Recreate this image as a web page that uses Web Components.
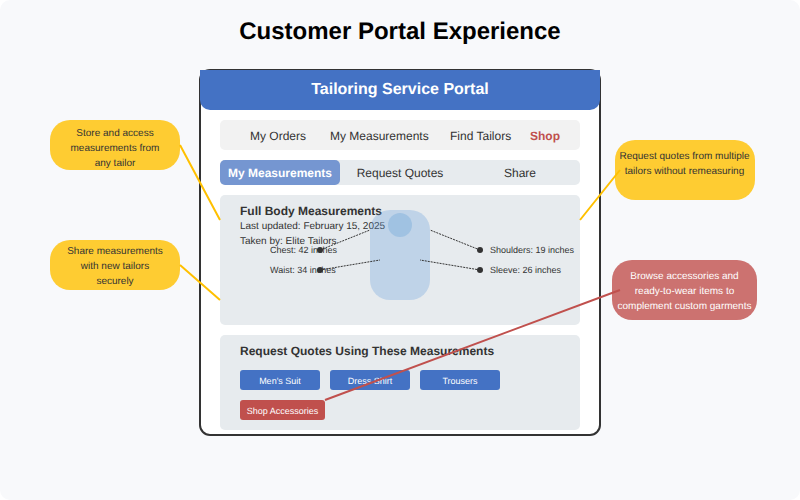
<!DOCTYPE html>
<html lang="en">
<head>
<meta charset="utf-8">
<title>Customer Portal Experience</title>
<style>
  body { margin: 0; background: #fff; font-family: "Liberation Sans", Arial, sans-serif; color: #333; text-rendering: geometricPrecision; }
</style>
</head>
<body>
<portal-scene>
  <span slot="title">Customer Portal Experience</span>
  <call-out slot="left">Store and access<br>measurements from<br>any tailor</call-out>
  <call-out slot="left" class="tight">Share measurements<br>with new tailors<br>securely</call-out>
  <service-portal slot="portal">
    <span slot="heading">Tailoring Service Portal</span>
    <portal-nav></portal-nav>
    <portal-tabs></portal-tabs>
    <info-panel>
      <span slot="heading">Full Body Measurements</span>
      <div>Last updated: February 15, 2025</div>
      <div>Taken by: Elite Tailors</div>
      <body-figure slot="figure"></body-figure>
    </info-panel>
    <info-panel class="quotes">
      <span slot="heading">Request Quotes Using These Measurements</span>
      <quote-actions></quote-actions>
    </info-panel>
  </service-portal>
  <call-out slot="right" class="wide">Request quotes from multiple<br>tailors without remeasuring</call-out>
  <call-out slot="right" class="shop">Browse accessories and<br>ready-to-wear items to<br>complement custom garments</call-out>
</portal-scene>

<script>
const define = (name, html) => customElements.define(name, class extends HTMLElement {
  constructor() {
    super();
    this.attachShadow({ mode: "open" }).innerHTML = html;
  }
});

define("portal-scene", `
  <style>
    :host { display: block; position: relative; box-sizing: border-box; min-height: 100vh; background: #f8f9fb; border-radius: 10px; overflow: hidden; }
    h1 { margin: 0; padding: 18px 0 23px; font-size: 24px; line-height: 28px; text-align: center; color: #000; }
    .row { display: grid; grid-template-columns: 1fr 402px 1fr; }
    .left, .right { display: flex; flex-direction: column; }
    .left { align-items: flex-end; gap: 70px; padding: 51px 19px 0 0; }
    .right { align-items: center; justify-self: start; gap: 60px; padding: 71px 0 0 11px; }
    svg { position: absolute; top: 0; left: 50%; margin-left: -400px; pointer-events: none; }
  </style>
  <h1><slot name="title"></slot></h1>
  <div class="row">
    <div class="left"><slot name="left"></slot></div>
    <slot name="portal"></slot>
    <div class="right"><slot name="right"></slot></div>
  </div>
  <svg width="800" height="500" viewBox="0 0 800 500" fill="none" stroke-width="2" aria-hidden="true">
    <path stroke="#ffc000" d="M180 145 220 220M180 265 220 300M620 170 580 220"/>
    <path stroke="#c0504d" d="M620 290 325 400"/>
  </svg>`);

define("call-out", `
  <style>
    :host { display: block; box-sizing: border-box; width: 130px; height: 50px; padding-top: 6px; border-radius: 20px; background: rgb(255 192 0 / .8); font-size: 10px; line-height: 15px; text-align: center; white-space: nowrap; }
    :host(.tight) { padding-top: 4px; }
    :host(.wide) { width: 140px; height: 60px; padding-top: 9px; }
    :host(.shop) { width: 145px; height: 60px; padding-top: 9px; background: rgb(192 80 77 / .8); color: #fff; }
  </style>
  <slot></slot>`);

define("service-portal", `
  <style>
    :host { display: block; box-sizing: border-box; border: 2px solid #333; border-radius: 11px; background: #fff; }
    h2 { margin: -1px -1px 0; border-radius: 0 0 10px 10px; background: #4472c4; color: #fff; font-size: 16px; line-height: 40px; text-align: center; }
    .content { display: flex; flex-direction: column; gap: 10px; padding: 10px 19px 4px; }
  </style>
  <h2><slot name="heading"></slot></h2>
  <div class="content"><slot></slot></div>`);

define("portal-nav", `
  <style>
    :host { display: block; border-radius: 5px; background: #f2f2f2; font-size: 12px; line-height: 32px; height: 30px; }
    nav { display: grid; grid-template-columns: 80px 120px 80px auto; padding-left: 30px; }
    a { color: inherit; text-decoration: none; white-space: nowrap; }
    .shop { color: #c0504d; font-weight: bold; }
  </style>
  <nav><a href="#orders">My Orders</a><a href="#measurements">My Measurements</a><a href="#tailors">Find Tailors</a><a class="shop" href="#shop">Shop</a></nav>`);

define("portal-tabs", `
  <style>
    :host { display: grid; grid-template-columns: repeat(3, 1fr); border-radius: 5px; background: #e7ebee; }
    button { height: 25px; margin: 0; padding: 1px 0 0; border: 0; border-radius: 5px; background: none; color: inherit; font: 12px/24px "Liberation Sans", Arial, sans-serif; text-rendering: inherit; }
    .active { background: rgb(68 114 196 / .7); color: #fff; font-weight: bold; }
  </style>
  <button class="active">My Measurements</button><button>Request Quotes</button><button>Share</button>`);

define("info-panel", `
  <style>
    :host { display: block; position: relative; box-sizing: border-box; min-height: 130px; padding: 9px 20px 10px; border-radius: 5px; background: #e7ebee; font-size: 10px; line-height: 15px; }
    :host(.quotes) { min-height: 95px; }
    h3 { margin: 0; font-size: 12px; line-height: 15px; }
  </style>
  <h3><slot name="heading"></slot></h3>
  <slot></slot>
  <slot name="figure"></slot>`);

define("body-figure", `
  <style>
    :host { position: absolute; top: 0; left: 50%; margin-left: -180px; pointer-events: none; }
    svg { display: block; overflow: visible; }
    text { font-size: 9px; }
  </style>
  <svg width="360" height="130" viewBox="220 195 360 130" fill="#333">
    <rect x="370" y="210" width="60" height="90" rx="20" fill="#629ddb" opacity=".3"/>
    <circle cx="400" cy="225" r="12" fill="#5b9bd5" opacity=".3"/>
    <path d="M320 250 370 230M320 270 380 260M480 250 430 230M480 270 420 260" fill="none" stroke="#333" stroke-dasharray="2 1"/>
    <circle cx="320" cy="250" r="3"/><circle cx="320" cy="270" r="3"/>
    <circle cx="480" cy="250" r="3"/><circle cx="480" cy="270" r="3"/>
    <text x="270" y="253">Chest: 42 inches</text>
    <text x="270" y="273">Waist: 34 inches</text>
    <text x="490" y="253">Shoulders: 19 inches</text>
    <text x="490" y="273">Sleeve: 26 inches</text>
  </svg>`);

define("quote-actions", `
  <style>
    :host { display: flex; flex-wrap: wrap; gap: 10px; padding-top: 11px; }
    button { width: 80px; height: 20px; margin: 0; padding: 2px 0 0; border: 0; border-radius: 3px; background: #4472c4; color: #fff; font: 9px/18px "Liberation Sans", Arial, sans-serif; text-rendering: inherit; white-space: nowrap; }
    .shop { width: 85px; background: #c0504d; }
  </style>
  <button>Men's Suit</button><button>Dress Shirt</button><button>Trousers</button><button class="shop">Shop Accessories</button>`);
</script>
</body>
</html>
